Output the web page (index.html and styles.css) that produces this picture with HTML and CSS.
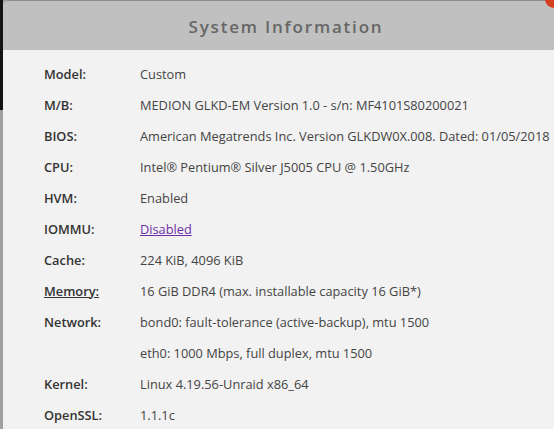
FILE: index.html
```html
<!DOCTYPE html>
<html lang="en">
<head>
    <meta charset="UTF-8">
    <title>System Information</title>
    <link rel="stylesheet" href="styles.css">
</head>
<body>
    <div class="page">
        <div class="backdrop">
            <div class="backdrop-top"></div>
        </div>
        <div class="dialog">
            <span class="close"></span>
            <div class="dialog-title">System Information</div>
            <div class="dialog-body">
                <table class="info">
                    <tr><td class="label">Model:</td><td>Custom</td></tr>
                    <tr><td class="label">M/B:</td><td>MEDION GLKD-EM Version 1.0 - s/n: MF4101S80200021</td></tr>
                    <tr><td class="label">BIOS:</td><td>American Megatrends Inc. Version GLKDW0X.008. Dated: 01/05/2018</td></tr>
                    <tr><td class="label">CPU:</td><td>Intel® Pentium® Silver J5005 CPU @ 1.50GHz</td></tr>
                    <tr><td class="label">HVM:</td><td>Enabled</td></tr>
                    <tr><td class="label">IOMMU:</td><td><a href="#">Disabled</a></td></tr>
                    <tr><td class="label">Cache:</td><td>224 KiB, 4096 KiB</td></tr>
                    <tr><td class="label"><u>Memory:</u></td><td>16 GiB DDR4 (max. installable capacity 16 GiB*)</td></tr>
                    <tr><td class="label">Network:</td><td>bond0: fault-tolerance (active-backup), mtu 1500</td></tr>
                    <tr><td class="label"></td><td>eth0: 1000 Mbps, full duplex, mtu 1500</td></tr>
                    <tr><td class="label">Kernel:</td><td>Linux 4.19.56-Unraid x86_64</td></tr>
                    <tr><td class="label">OpenSSL:</td><td>1.1.1c</td></tr>
                </table>
            </div>
        </div>
    </div>
</body>
</html>
```

FILE: styles.css
```css
body {
    margin: 0;
    padding: 0;
    overflow: hidden;
    background: #a0a0a0;
    font-family: "Open Sans", "DejaVu Sans", sans-serif;
}
.page {
    display: flex;
    height: 429px;
}
.backdrop {
    width: 3px;
    flex-shrink: 0;
    background: #a0a0a0;
}
.backdrop-top {
    height: 110px;
    background: #141414;
}
.dialog {
    position: relative;
    width: 566px;
    flex-shrink: 0;
    background: #f2f2f2;
    border-top-left-radius: 5px;
}
.close {
    position: absolute;
    top: -10px;
    right: 6px;
    width: 18px;
    height: 18px;
    border-radius: 50%;
    background: #d2401e;
}
.dialog-title {
    height: 49px;
    line-height: 51px;
    border-top: 1px solid #8c8c8c;
    border-top-left-radius: 5px;
    background: #c0c0c0;
    color: #666;
    font-size: 17px;
    font-weight: 600;
    letter-spacing: 1.8px;
    text-align: center;
}
.dialog-body {
    padding: 8px 0 0 41px;
}
.info {
    border-collapse: collapse;
    font-size: 12.8px;
    color: #444;
}
.info td {
    height: 31px;
    padding: 0;
    white-space: nowrap;
}
.info .label {
    width: 96px;
    font-weight: 600;
    color: #333;
}
.info a {
    color: #6c2fa8;
}
```
